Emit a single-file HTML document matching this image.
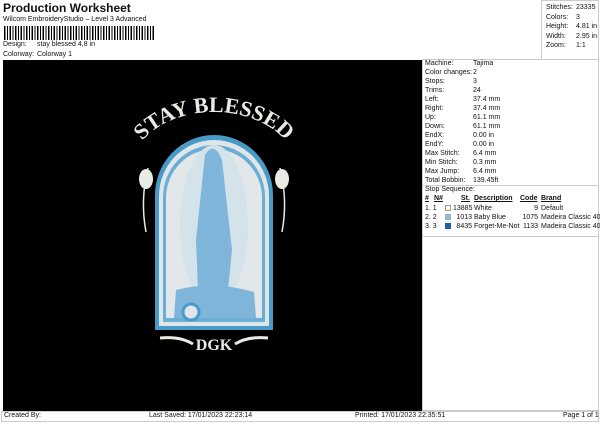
<!DOCTYPE html>
<html><head><style>
*{margin:0;padding:0;box-sizing:border-box}
body{width:600px;height:424px;background:#fff;font-family:"Liberation Sans",sans-serif;font-size:7px;color:#111;position:relative;overflow:hidden}
.a{position:absolute;white-space:nowrap}
</style></head><body>
<div class="a" style="left:3px;top:1px;font-size:12px;font-weight:bold">Production Worksheet</div>
<div class="a" style="left:3px;top:16px">Wilcom EmbroideryStudio – Level 3 Advanced</div>
<div class="a" style="left:4px;top:26px;width:150px;height:14px;background:repeating-linear-gradient(90deg,#000 0 1.5px,#fff 1.5px 3px,#000 3px 4px,#fff 4px 5.5px)"></div>
<div class="a" style="left:3px;top:41px">Design:</div><div class="a" style="left:37px;top:41px">stay blessed 4,8 in</div>
<div class="a" style="left:3px;top:51px">Colorway:</div><div class="a" style="left:37px;top:51px">Colorway 1</div>
<div class="a" style="left:541px;top:0;width:58px;height:59px;border-left:1px solid #ccc;border-top:1px solid #ccc;border-right:1px solid #ccc"></div>
<div class="a" style="left:546px;top:3px;line-height:9.5px">Stitches:<br>Colors:<br>Height:<br>Width:<br>Zoom:</div>
<div class="a" style="left:576px;top:3px;line-height:9.5px">23335<br>3<br>4.81 in<br>2.95 in<br>1:1</div>
<div class="a" style="left:3px;top:60px;width:419px;height:351px;background:#000"></div>
<div class="a" style="left:422px;top:59px;width:177px;height:352px;border:1px solid #ccc"></div>
<div class="a" style="left:425px;top:59px;line-height:9px">Machine:<br>Color changes:<br>Stops:<br>Trims:<br>Left:<br>Right:<br>Up:<br>Down:<br>EndX:<br>EndY:<br>Max Stitch:<br>Min Stitch:<br>Max Jump:<br>Total Bobbin:</div>
<div class="a" style="left:473px;top:59px;line-height:9px">Tajima<br>2<br>3<br>24<br>37.4 mm<br>37.4 mm<br>61.1 mm<br>61.1 mm<br>0.00 in<br>0.00 in<br>6.4 mm<br>0.3 mm<br>6.4 mm<br>139.45ft</div>
<div class="a" style="left:423px;top:185px;width:175px;border-top:1px solid #ccc"></div>
<div class="a" style="left:425px;top:186px">Stop Sequence:</div>
<div class="a" style="left:423px;top:236px;width:175px;border-top:1px solid #ccc"></div>
<div class="a" style="left:425px;top:195px;font-weight:bold;text-decoration:underline">#</div>
<div class="a" style="left:434px;top:195px;font-weight:bold;text-decoration:underline">N#</div>
<div class="a" style="left:461px;top:195px;font-weight:bold;text-decoration:underline">St.</div>
<div class="a" style="left:474px;top:195px;font-weight:bold;text-decoration:underline">Description</div>
<div class="a" style="left:520px;top:195px;font-weight:bold;text-decoration:underline">Code</div>
<div class="a" style="left:541px;top:195px;font-weight:bold;text-decoration:underline">Brand</div>
<div class="a" style="left:425px;top:204px;line-height:9px">1. 1<br>2. 2<br>3. 3</div>
<div class="a" style="left:445px;top:205px;width:6px;height:6px;border:1px solid #999;background:#fff"></div>
<div class="a" style="left:445px;top:214px;width:6px;height:6px;background:#8eb4df"></div>
<div class="a" style="left:445px;top:223px;width:6px;height:6px;background:#1f5fa8"></div>
<div class="a" style="left:453px;top:204px;line-height:9px;text-align:right;width:19px">13885<br>1013<br>8435</div>
<div class="a" style="left:474px;top:204px;line-height:9px">White<br>Baby Blue<br>Forget-Me-Not</div>
<div class="a" style="left:520px;top:204px;line-height:9px;text-align:right;width:18px">9<br>1075<br>1133</div>
<div class="a" style="left:541px;top:204px;line-height:9px">Default<br>Madeira Classic 40<br>Madeira Classic 40</div>
<div class="a" style="left:1px;top:411px;width:598px;height:11px;border:1px solid #ccc"></div>
<div class="a" style="left:4px;top:412px">Created By:</div>
<div class="a" style="left:149px;top:412px">Last Saved: 17/01/2023 22:23:14</div>
<div class="a" style="left:355px;top:412px">Printed: 17/01/2023 22:35:51</div>
<div class="a" style="left:563px;top:412px">Page 1 of 1</div>
<svg class="a" style="left:0;top:0" width="600" height="424" xmlns="http://www.w3.org/2000/svg" xmlns:xlink="http://www.w3.org/1999/xlink">
<defs><path id="arc" d="M130 172 A84 60 0 0 1 298 172" fill="none"/></defs>
<path d="M155 330 V195 A59 60 0 0 1 273 195 V330 Z" fill="#4a9ac9"/>
<path d="M159 326 V196 A55 56 0 0 1 269 196 V326 Z" fill="#dfe6e8"/>
<path d="M163 322 V197 A51 52 0 0 1 265 197 V322 Z" fill="#6aaed6"/>
<path d="M166 318 V198 A48 49 0 0 1 262 198 V318 Z" fill="#e2e8ea"/>
<ellipse cx="214" cy="225" rx="34" ry="80" fill="#d4e2ea"/>
<path d="M205 155 Q214 140 222 160 L232 250 L228 290 L198 290 L196 240 Z" fill="#7fb5da"/>
<path d="M176 290 Q214 280 254 292 L256 318 L174 318 Z" fill="#7fb5da"/>
<circle cx="191" cy="312" r="8" fill="#dfe6e8" stroke="#4a9ac9" stroke-width="3"/>
<text font-family="Liberation Serif,serif" font-weight="bold" font-size="22" fill="#e8ece4" text-anchor="middle"><textPath xlink:href="#arc" href="#arc" startOffset="50%">STAY BLESSED</textPath></text>
<ellipse cx="146" cy="179" rx="7" ry="10" fill="#e8ece4"/>
<ellipse cx="282" cy="179" rx="7" ry="10" fill="#e8ece4"/>
<path d="M148 168 Q140 200 146 232" stroke="#e8ece4" fill="none" stroke-width="1.5"/>
<path d="M280 168 Q288 200 282 232" stroke="#e8ece4" fill="none" stroke-width="1.5"/>
<text x="214" y="350" font-family="Liberation Serif,serif" font-weight="bold" font-size="16" fill="#e8ece4" text-anchor="middle">DGK</text>
<path d="M160 338 Q180 336 193 344 M268 338 Q248 336 235 344" stroke="#e8ece4" stroke-width="3" fill="none"/>
</svg>
</body></html>
